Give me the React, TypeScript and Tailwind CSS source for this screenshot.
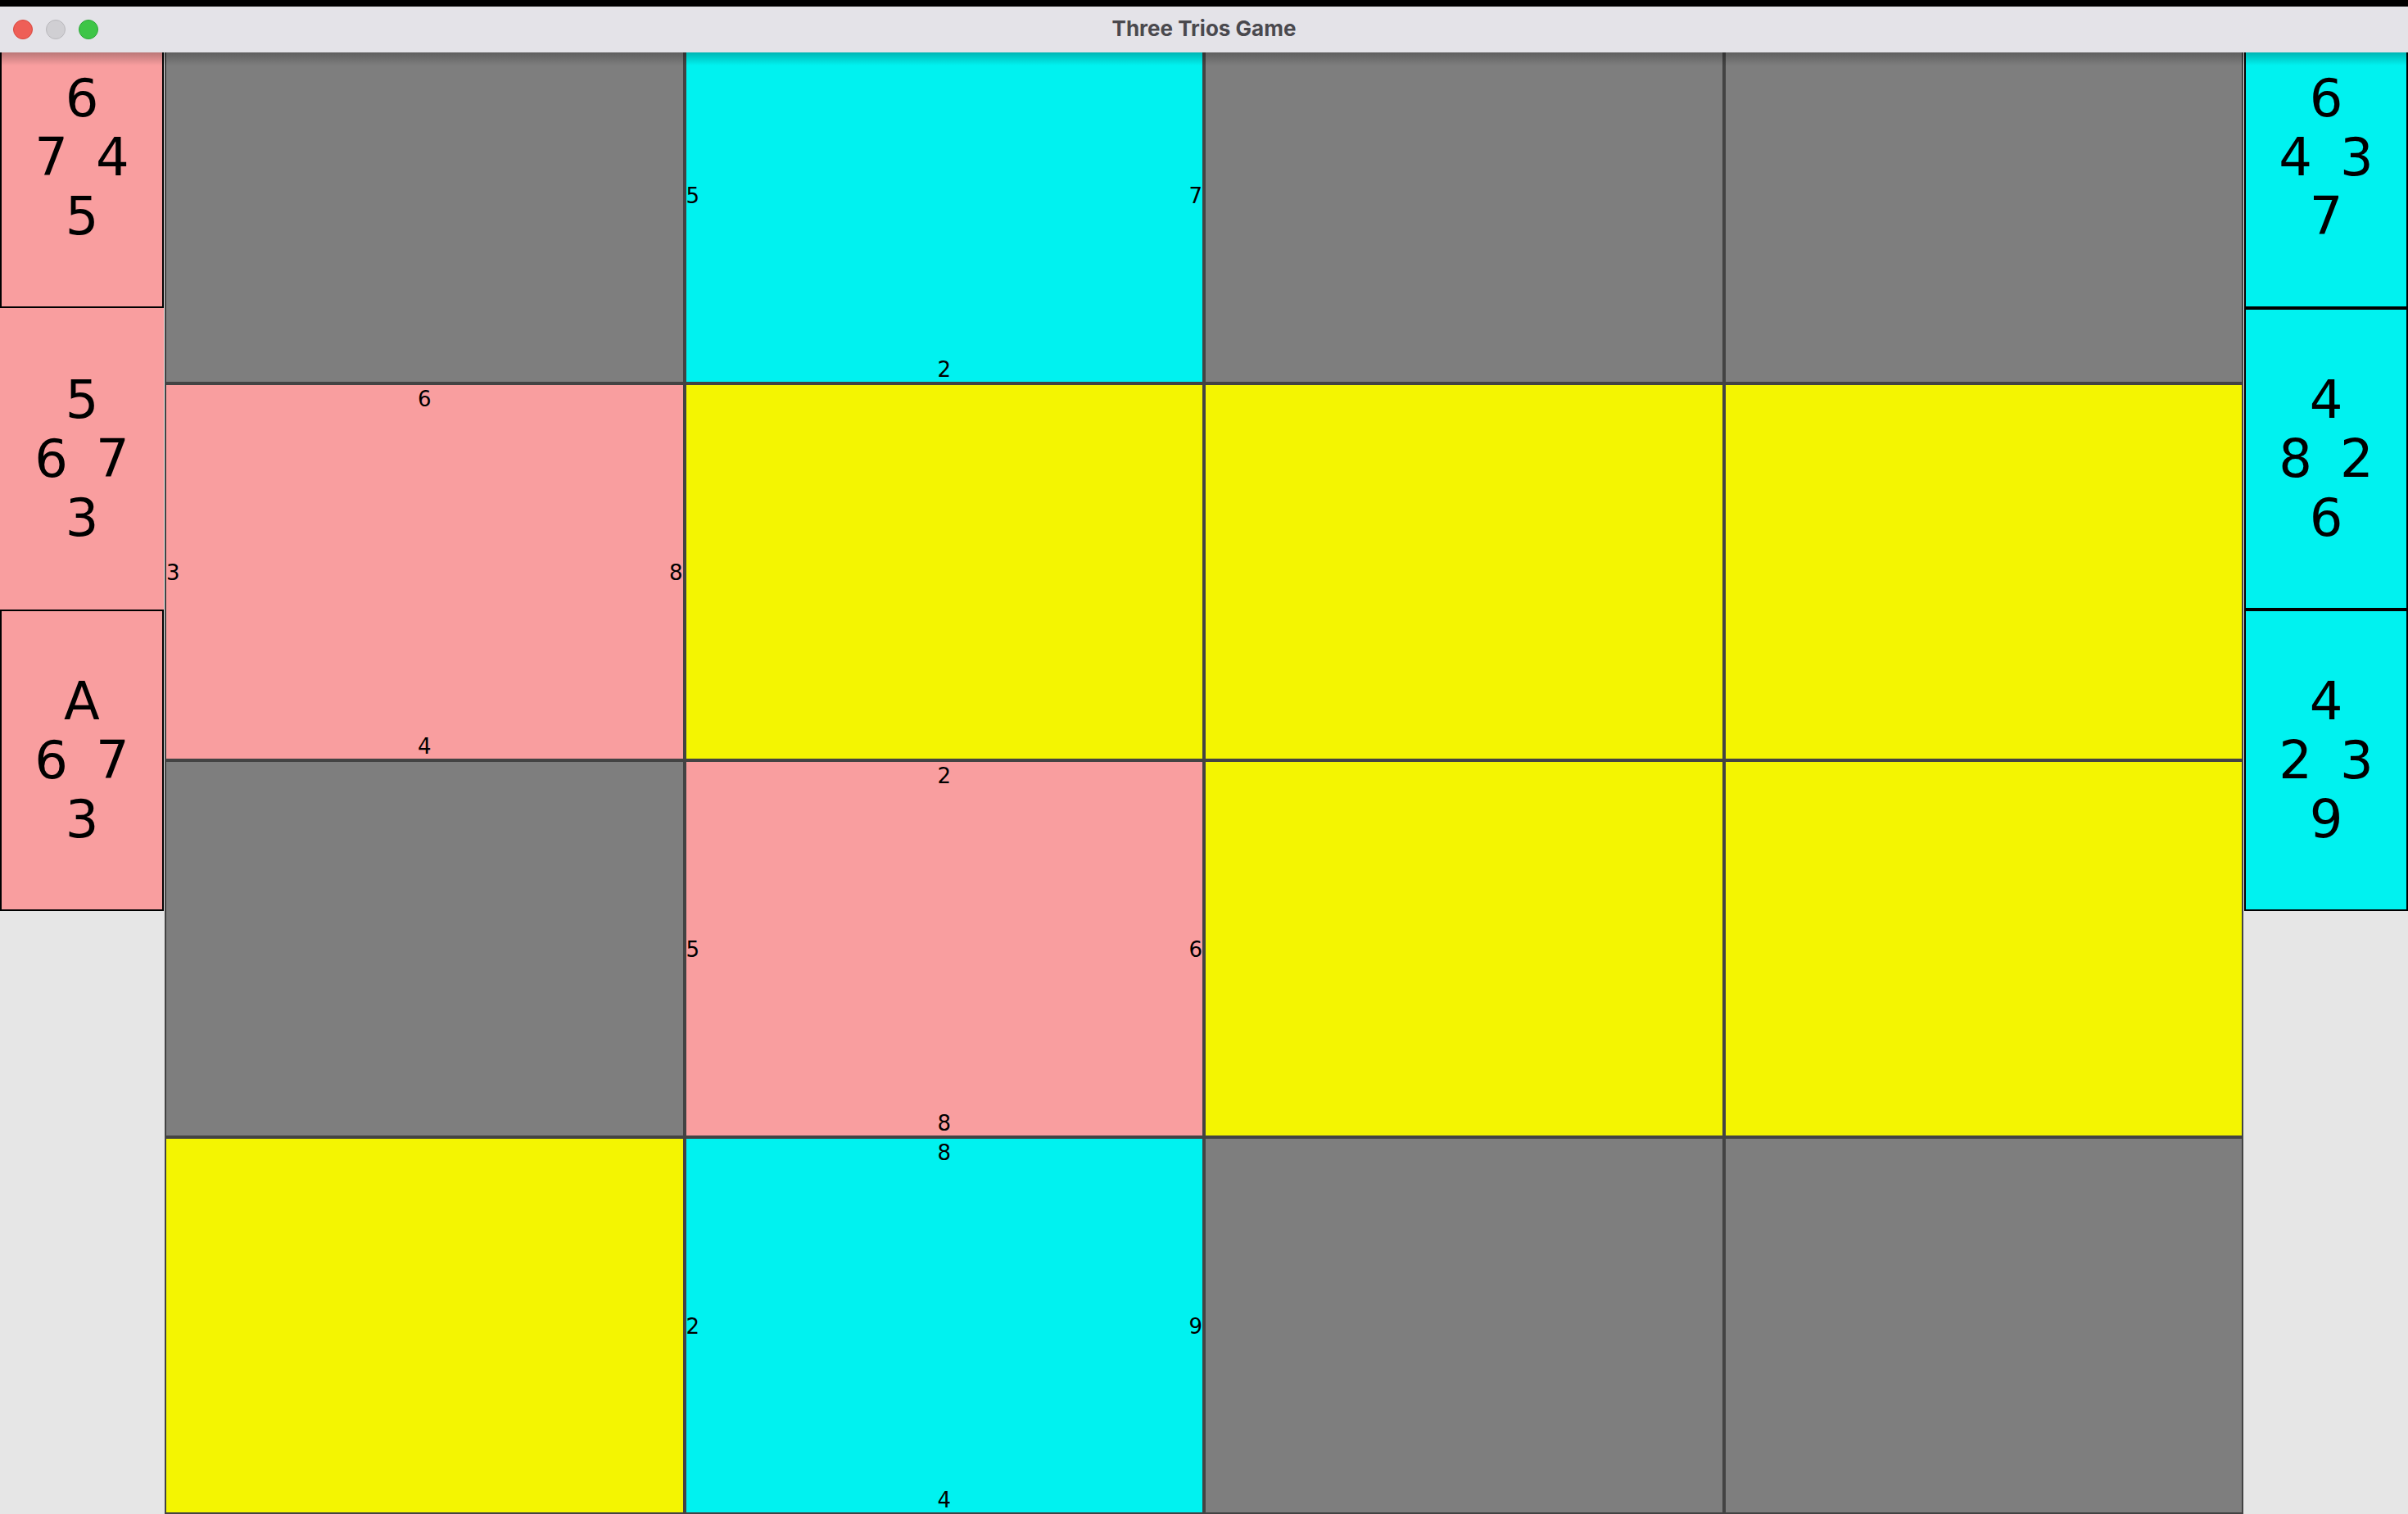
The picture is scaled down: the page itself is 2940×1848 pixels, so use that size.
import React from "react";

type Owner = "pink" | "cyan";
type Cell =
  | { kind: "hole" }
  | { kind: "empty" }
  | { kind: "card"; owner: Owner; n: string; s: string; e: string; w: string };

const H: Cell = { kind: "hole" };
const E: Cell = { kind: "empty" };
const C = (owner: Owner, n: string, s: string, e: string, w: string): Cell => ({
  kind: "card",
  owner,
  n,
  s,
  e,
  w,
});

const board: Cell[][] = [
  [H, C("cyan", "3", "2", "7", "5"), H, H],
  [C("pink", "6", "4", "8", "3"), E, E, E],
  [H, C("pink", "2", "8", "6", "5"), E, E],
  [E, C("cyan", "8", "4", "9", "2"), H, H],
];

type HandCard = { n: string; w: string; e: string; s: string; bordered: boolean };

const leftHand: HandCard[] = [
  { n: "6", w: "7", e: "4", s: "5", bordered: true },
  { n: "5", w: "6", e: "7", s: "3", bordered: false },
  { n: "A", w: "6", e: "7", s: "3", bordered: true },
];

const rightHand: HandCard[] = [
  { n: "6", w: "4", e: "3", s: "7", bordered: true },
  { n: "4", w: "8", e: "2", s: "6", bordered: true },
  { n: "4", w: "2", e: "3", s: "9", bordered: true },
];

function HandCardView({ card, owner }: { card: HandCard; owner: Owner }) {
  const bg = owner === "pink" ? "bg-[#f99e9f]" : "bg-[#00f2f0]";
  const border = card.bordered ? "border-2 border-black" : "";
  return (
    <div
      className={`w-[200px] h-[368px] shrink-0 flex flex-col items-center justify-center text-black text-[64px] leading-[72px] ${bg} ${border}`}
      style={{ fontFamily: '"DejaVu Sans", "Liberation Sans", sans-serif' }}
    >
      <div>{card.n}</div>
      <div className="flex gap-[34px]">
        <span>{card.w}</span>
        <span>{card.e}</span>
      </div>
      <div>{card.s}</div>
    </div>
  );
}

function BoardCell({ cell }: { cell: Cell }) {
  let bg = "bg-[#7e7e7e]";
  if (cell.kind === "empty") bg = "bg-[#f4f501]";
  if (cell.kind === "card") bg = cell.owner === "pink" ? "bg-[#f99e9f]" : "bg-[#00f2f0]";
  return (
    <div
      className={`border-2 border-[#434343] ${bg} flex flex-col text-black text-[26px] leading-[30px] min-h-0 min-w-0`}
      style={{ fontFamily: '"DejaVu Sans", "Liberation Sans", sans-serif' }}
    >
      {cell.kind === "card" && (
        <>
          <div className="text-center pt-[2px]">{cell.n}</div>
          <div className="flex-1 flex items-center justify-between">
            <span>{cell.w}</span>
            <span>{cell.e}</span>
          </div>
          <div className="text-center">{cell.s}</div>
        </>
      )}
    </div>
  );
}

export default function App() {
  return (
    <div className="relative w-[2940px] h-[1848px] overflow-hidden bg-[#e6e6e6]">
      <div className="h-[8px] bg-black" />
      <div className="flex h-[1840px]">
        <div className="w-[201px] shrink-0 flex flex-col">
          {leftHand.map((c, i) => (
            <HandCardView key={i} card={c} owner="pink" />
          ))}
        </div>
        <div className="w-[2538px] h-[1840px] shrink-0 grid grid-cols-4 grid-rows-4">
          {board.flat().map((cell, i) => (
            <BoardCell key={i} cell={cell} />
          ))}
        </div>
        <div className="w-[201px] shrink-0 flex flex-col items-end">
          {rightHand.map((c, i) => (
            <HandCardView key={i} card={c} owner="cyan" />
          ))}
        </div>
      </div>

      {/* window title bar overlay */}
      <div className="absolute left-0 top-[8px] w-full h-[56px] bg-[#e4e3e8] flex items-center">
        <div className="flex items-center gap-[16px] pl-[16px]">
          <div className="w-[24px] h-[24px] rounded-full bg-[#ee5f57] border border-[#d9493f]" />
          <div className="w-[24px] h-[24px] rounded-full bg-[#d0cfd3] border border-[#b9b8bc]" />
          <div className="w-[24px] h-[24px] rounded-full bg-[#3ec547] border border-[#2ea83a]" />
        </div>
        <div
          className="absolute left-0 right-0 top-0 h-full flex items-center justify-center pb-[3px] text-[26px] font-bold text-[#4a494e]"
          style={{ fontFamily: 'Inter, "Noto Sans", sans-serif' }}
        >
          Three Trios Game
        </div>
      </div>
      <div className="absolute left-0 top-[64px] w-full h-[16px] bg-gradient-to-b from-black/25 to-transparent pointer-events-none" />
    </div>
  );
}
